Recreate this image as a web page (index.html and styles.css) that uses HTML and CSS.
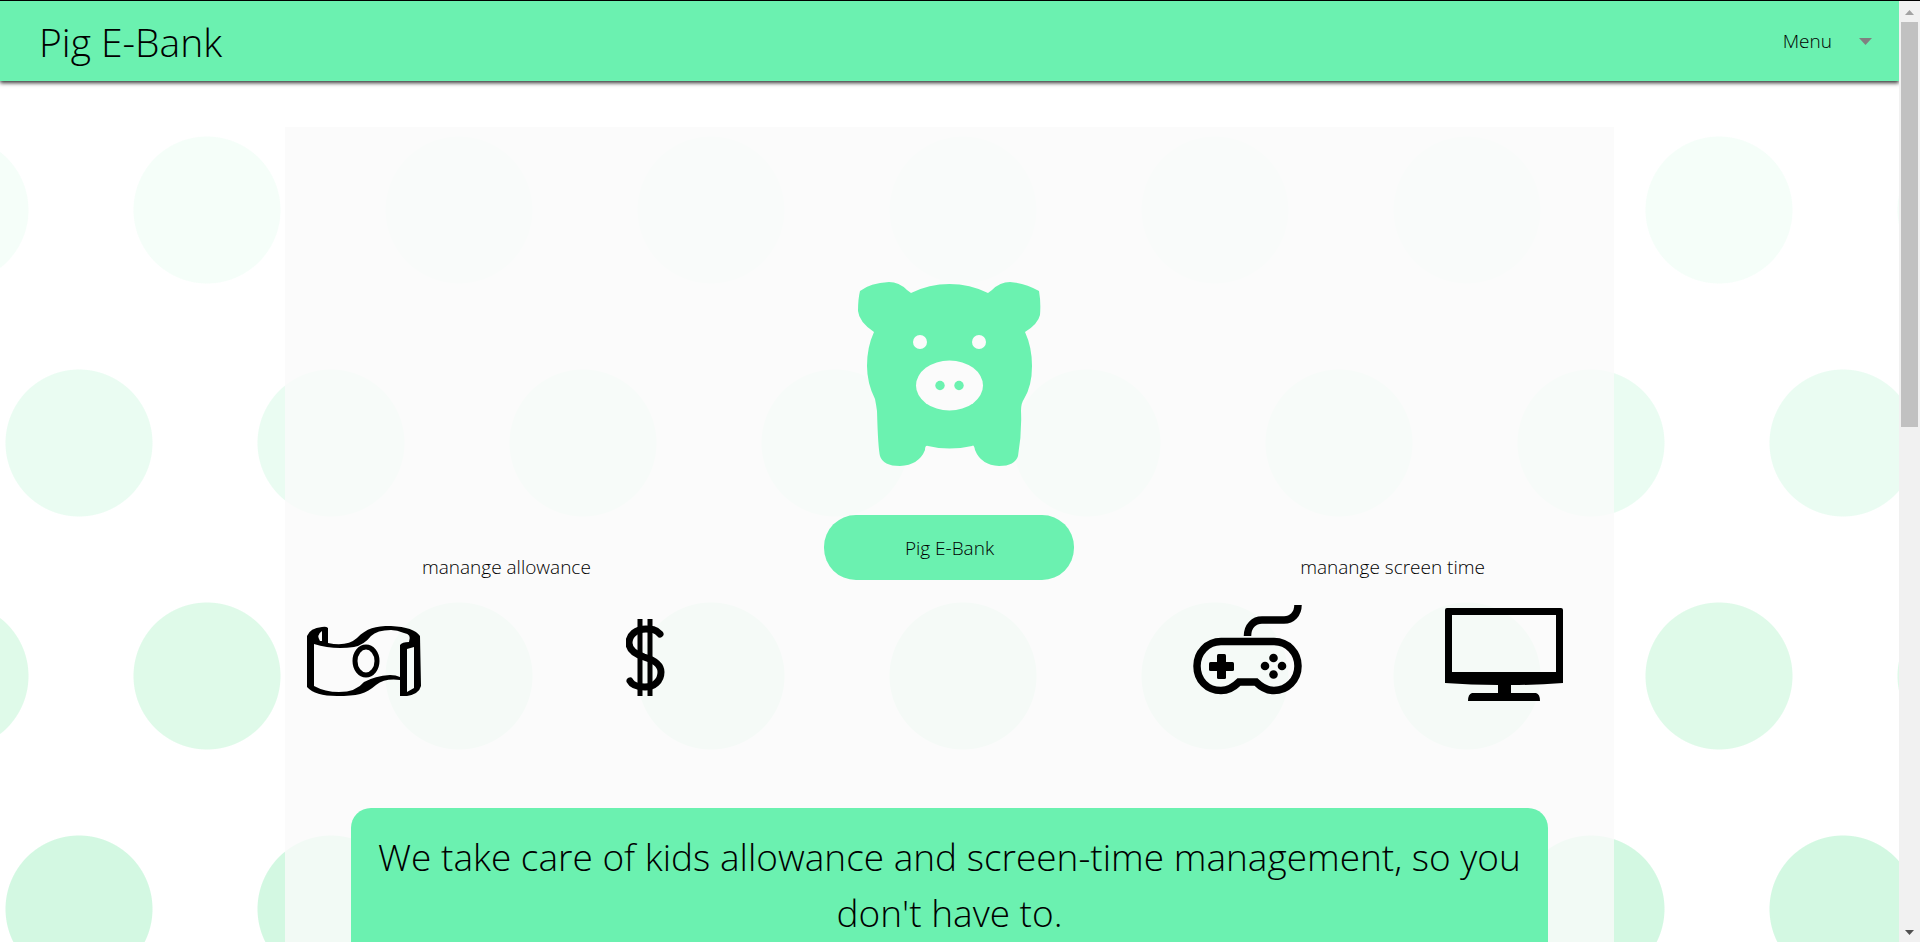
FILE: index.html
```html
<!DOCTYPE html>
<html lang="en">
<head>
<meta charset="utf-8">
<meta name="viewport" content="width=device-width, initial-scale=1">
<title>Pig E-Bank</title>
<link rel="stylesheet" href="styles.css">
</head>
<body>
<div class="shell">
  <div class="page">
    <header class="topbar">
      <h1 class="brand">Pig E-Bank</h1>
      <button class="menu" type="button" aria-haspopup="true">Menu
        <svg class="menu-caret" viewBox="0 0 13 7" aria-hidden="true"><path d="M0 0h13L6.5 7z"/></svg>
      </button>
    </header>

    <main class="panel">
      <section class="hero">
        <div class="feature">
          <p class="feature-label">manange allowance</p>
          <div class="feature-icons feature-icons-money">
            <svg class="icon-note" viewBox="0 0 114 70" aria-hidden="true">
              <path fill-rule="evenodd" d="M0 10Q3 2 15 1Q19 0 21 2V17Q40 21 50 12C60 2 68 0 84 0Q107 1 113 10L114 60Q112 68 100 70H93V54Q78 52 69 59C59 68 50 70 30 70Q8 70 0 61ZM7 18V60Q18 66 32 66Q49 66 57 56Q68 50 83 49Q89 49 93 51V19Q95 16 102 16Q105 8 97 7Q90 4 84 4Q70 4 64 10Q57 19 47 21Q26 24 7 18ZM15 5Q9 9 13 15H15ZM100 23V66L107 62V21Z"/>
              <ellipse cx="59" cy="35" rx="11" ry="14" fill="none" stroke="#000" stroke-width="5"/>
            </svg>
            <svg class="icon-dollar" viewBox="0 0 39 77" aria-hidden="true">
              <path d="M14 0V77M24 0V77" fill="none" stroke="#000" stroke-width="5"/>
              <path d="M34 15C30 10 25 10 20 10C10 10 3 16 3 24C3 31 9 35 18 38C28 41 35 45 35 53C35 62 28 68 19 68C11 68 6 66 4 62" fill="none" stroke="#000" stroke-width="7" stroke-linecap="round"/>
            </svg>
          </div>
        </div>

        <div class="hero-center">
          <svg class="pig" viewBox="0 0 183 184" role="img" aria-label="Pig">
            <path fill="#6bf2b0" d="M2 9Q12 1 31 0Q41 0 49 8L53 11Q71 2 91.500 2Q112 2 130 11L134 8Q142 0 152 0Q167 1 181 9Q183 20 182 33Q180 42 167 50Q174 65 174 84Q174 104 166 117Q163 121 163 129Q164 151 160 174Q157 184 141 184Q123 183 117 168Q116 162 114 164Q91 169 70 164Q67 163 67 168Q61 183 42 184Q25 184 22 174Q20 166 19 129Q18 122 17 117Q9 101 9 84Q9 65 16 50Q1 40 0 29Q0 17 2 9Z"/>
            <g fill="#fbfbfb"><circle cx="62" cy="60" r="7"/><circle cx="121" cy="60" r="7"/><ellipse cx="91.500" cy="103.500" rx="33.500" ry="25"/></g>
            <g fill="#6bf2b0"><circle cx="82" cy="103.500" r="4.700"/><circle cx="101" cy="103.500" r="4.700"/></g>
          </svg>
          <button class="pill" type="button">Pig E-Bank</button>
        </div>

        <div class="feature">
          <p class="feature-label">manange screen time</p>
          <div class="feature-icons feature-icons-screen">
            <svg class="icon-pad" viewBox="0 0 109 90" aria-hidden="true">
              <path d="M54.500 31C54.500 21 61 15 69 15H91C99 15 105 9 105 0M28 36.500H81C95 36.500 105 48 105 61C105 75 94 85.500 81 85.500C74 85.500 68 82 63 77Q61 77 57 77H46C41 82 36 85.500 28 85.500C14 85.500 4 75 4 61C4 48 14 36.500 28 36.500Z" fill="none" stroke="#000" stroke-width="7.500"/>
              <rect x="24" y="49" width="9" height="25" rx="1.500"/><rect x="16" y="57" width="25" height="9" rx="1.500"/>
              <circle cx="80.500" cy="53" r="4.300"/><circle cx="80.500" cy="69.500" r="4.300"/><circle cx="72" cy="61" r="4.300"/><circle cx="89" cy="61" r="4.300"/>
            </svg>
            <svg class="icon-tv" viewBox="0 0 118 93" aria-hidden="true">
              <path fill-rule="evenodd" d="M2 0H116Q118 0 118 2V75Q92 77 66 77V85H91Q95 86 95 93H23Q23 86 27 85H53V77Q26 77 0 75V2Q0 0 2 0ZM7 7V64H111V7Z"/>
            </svg>
          </div>
        </div>
      </section>

      <section class="banner">
        <h2 class="banner-text">We take care of kids allowance and screen-time management, so you don't have to.</h2>
      </section>
    </main>
  </div>

  <div class="scrollbar" aria-hidden="true">
    <svg class="scroll-arrow" viewBox="0 0 9 5"><path fill="#a3a3a3" d="M0 5h9L4.500 0z"/></svg>
    <div class="scroll-track"><div class="scroll-thumb"></div></div>
    <svg class="scroll-arrow" viewBox="0 0 9 5"><path fill="#505050" d="M0 0h9L4.500 5z"/></svg>
  </div>
</div>
</body>
</html>
```
FILE: styles.css
```css
* { box-sizing: border-box; }

body {
  margin: 0;
  font-family: "Open Sans", "Noto Sans", sans-serif;
  font-weight: 300;
  font-size: 19px;
  color: #000;
}

h1, h2, p { margin: 0; font-weight: inherit; }

button { font: inherit; color: inherit; border: 0; cursor: pointer; }

.shell {
  display: flex;
  height: 100vh;
  border-top: 1px solid #000;
  overflow: hidden;
}

.page {
  flex: 1;
  min-width: 0;
  overflow-y: auto;
  scrollbar-width: none;
  background-color: #fff;
  background-image:
    radial-gradient(circle, #f5fef9 73px, rgba(245, 254, 249, 0) 74px),
    radial-gradient(circle, #eafcf2 73px, rgba(234, 252, 242, 0) 74px),
    radial-gradient(circle, #dffae9 73px, rgba(223, 250, 233, 0) 74px),
    radial-gradient(circle, #d3f8e2 73px, rgba(211, 248, 226, 0) 74px);
  background-size: 252px 150px;
  background-repeat: repeat-x;
  background-position: 81px 134px, -47px 367px, 81px 600px, -47px 833px;
}

.topbar {
  display: flex;
  align-items: center;
  justify-content: space-between;
  height: 80px;
  padding: 0 27px 0 39px;
  background: #6bf1b0;
  box-shadow: 0 2px 4px rgba(0, 0, 0, .8);
}

.brand { font-size: 39px; line-height: 56px; padding-top: 2px; }

.menu {
  display: flex;
  align-items: center;
  gap: 27px;
  padding: 0;
  background: none;
}

.menu-caret { width: 13px; height: 7px; fill: #808080; }

.panel {
  width: 70%;
  margin: 46px auto 0;
  padding-bottom: 64px;
  background: rgba(250, 250, 250, .8);
}

.hero {
  display: grid;
  grid-template-columns: repeat(3, 1fr);
  align-items: end;
  padding-top: 155px;
}

.hero-center {
  display: flex;
  flex-direction: column;
  align-items: center;
  gap: 49px;
  padding-bottom: 228px;
}

.pig { width: 183px; height: 184px; }

.pill {
  width: 250px;
  height: 65px;
  border-radius: 32px;
  background: #6bf1b0;
}

.feature { padding-bottom: 107px; }

.feature-label { text-align: center; line-height: 24px; }

.feature-icons {
  display: flex;
  justify-content: space-between;
  align-items: flex-end;
  height: 122px;
}

.feature-icons-money { padding: 0 63px 5px 22px; }
.feature-icons-screen { padding: 0 51px 0 22px; }

.icon-note { width: 114px; height: 70px; }
.icon-dollar { width: 39px; height: 77px; }
.icon-pad { width: 109px; height: 90px; margin-bottom: 6px; }
.icon-tv { width: 118px; height: 93px; }

.banner {
  width: 90%;
  margin: 0 auto;
  padding: 21px 20px;
  border-radius: 20px;
  background: #6bf1b0;
}

.banner-text { font-size: 37px; line-height: 56px; text-align: center; }

.scrollbar {
  display: flex;
  flex-direction: column;
  align-items: center;
  gap: 7px;
  width: 21px;
  padding: 9px 2px 7px;
  background: #f1f1f1;
}

.scroll-arrow { width: 9px; height: 5px; flex: none; }

.scroll-track { flex: 1; width: 17px; }

.scroll-thumb { height: 45%; background: #c1c1c1; }
```
